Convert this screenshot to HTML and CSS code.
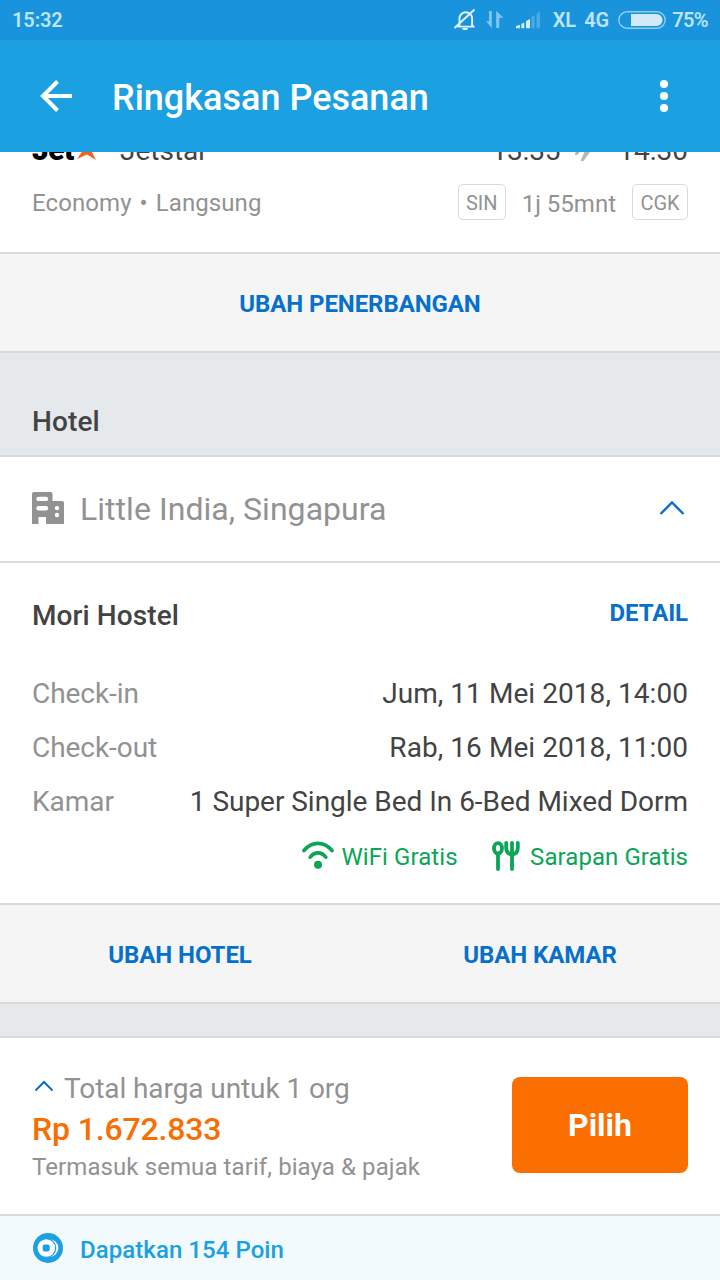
FILE: index.html
```html
<!DOCTYPE html>
<html lang="id">
<head>
<meta charset="utf-8">
<title>Ringkasan Pesanan</title>
<link rel="stylesheet" href="styles.css">
</head>
<body>
<div class="screen">
  <div class="status-bar">
    <span class="clock">15:32</span>
    <svg class="status-icons" width="92" height="24" viewBox="0 0 92 24">
      <g fill="none" stroke="#e3f3fc" stroke-width="1.9">
        <path d="M4.500 18.600h17M6.500 18V10.500a6.300 6.300 0 0 1 12.600 0V18l2.400.8M1.500 20L21.500 1.500"/>
      </g>
      <path d="M9 20h6a3 2 0 0 1-6 0z" fill="#e3f3fc"/>
      <path d="M38.800 3v17L33 13.200h3V3zM43.200 20V3L50.500 9.800h-4.300V20z" fill="#84c5ee"/>
      <path d="M63 20.300v-2.300l4-1.200v3.500zM68.300 20.300v-4.300l3-1.500v5.800zM73 20.300v-7.300l4-2v9.300z" fill="#d5ecfa"/>
      <path d="M78.500 20.300V9l3-2v13.300zM83.500 20.300V5.500l3.500-2v16.800z" fill="#4aabe3"/>
    </svg>
    <span class="carrier">XL</span>
    <span class="network">4G</span>
    <svg class="battery" width="48" height="18" viewBox="0 0 48 18">
      <rect x=".8" y=".8" width="46.400" height="16.400" rx="8.200" fill="none" stroke="#8dcff3" stroke-width="1.400"/>
      <path d="M13 3h25.500a6 6 0 0 1 0 12H13z" fill="#d3e9f7"/>
    </svg>
    <span class="percent">75%</span>
  </div>

  <header class="app-bar">
    <svg class="back" width="32" height="32" viewBox="0 0 32 32" fill="none" stroke="#fff" stroke-width="4">
      <path d="M17.500 1.500L3 16l14.500 14.500M3 16h29"/>
    </svg>
    <h1 class="title">Ringkasan Pesanan</h1>
    <svg class="more" width="8" height="32" viewBox="0 0 8 32" fill="#fff">
      <circle cx="4" cy="4" r="4"/><circle cx="4" cy="16" r="4"/><circle cx="4" cy="28" r="4"/>
    </svg>
  </header>

  <main class="content">
    <section class="flight">
      <div class="flight-main">
        <span class="logo">Jet</span>
        <svg class="star" width="20" height="22" viewBox="0 0 20 22"><path d="M10 0l2.500 8H20l-5.500 5L19 22l-9-5.500L0 21l5.500-8L0 8h7.500z" fill="#f4631e"/></svg>
        <span class="airline">Jetstar</span>
        <span class="time time-from">13:35</span>
        <svg class="plane" width="24" height="24" viewBox="0 0 24 24" fill="#b5b5b5"><path d="M2 7h3l2.500 4h5L9.500 2h3l6 9H22a2 2 0 0 1 0 4h-5l-6.500 9h-3l4-9H7l-3 3H2l1-5z"/></svg>
        <span class="time">14:30</span>
      </div>
      <div class="flight-meta">
        <span class="cabin">Economy<span class="dot">•</span>Langsung</span>
        <span class="airport">SIN</span>
        <span class="duration">1j 55mnt</span>
        <span class="airport airport-to">CGK</span>
      </div>
    </section>
    <div class="actions actions-flight"><a class="link change-flight">UBAH PENERBANGAN</a></div>
    <h2 class="group-title"><span>Hotel</span></h2>

    <section class="place">
      <svg class="building" width="32" height="32" viewBox="0 0 32 32">
        <path fill="#929292" fill-rule="evenodd" d="M2 0h16.500a2 2 0 0 1 2 2v7H30a2 2 0 0 1 2 2v21H14v-7H6.500v7H0V2a2 2 0 0 1 2-2zM6.500 4.700a2.200 2.200 0 0 0 0 4.400h7.500a2.200 2.200 0 0 0 0-4.400zM6.500 14a2.200 2.200 0 0 0 0 4.400h7.500a2.200 2.200 0 0 0 0-4.400zM25 13.900a2.200 2.200 0 1 0 0 4.400a2.200 2.200 0 0 0 0-4.400zM25 20.800a2.200 2.200 0 1 0 0 4.400a2.200 2.200 0 0 0 0-4.400z"/>
      </svg>
      <span class="place-name">Little India, Singapura</span>
      <svg class="collapse" width="26" height="16" viewBox="0 0 26 16" fill="none" stroke="#0770cd" stroke-width="2.400"><path d="M1.500 14L13 2.500 24.500 14"/></svg>
    </section>

    <section class="hotel">
      <div class="hotel-head"><h3 class="hotel-name">Mori Hostel</h3><a class="link detail">DETAIL</a></div>
      <dl class="stay">
        <div class="stay-row"><dt class="check-in">Check-in</dt><dd class="date-in">Jum, 11 Mei 2018, 14:00</dd></div>
        <div class="stay-row"><dt class="check-out">Check-out</dt><dd class="date-out">Rab, 16 Mei 2018, 11:00</dd></div>
        <div class="stay-row"><dt class="room">Kamar</dt><dd class="room-name">1 Super Single Bed In 6-Bed Mixed Dorm</dd></div>
      </dl>
      <div class="perks">
        <svg class="wifi" width="32" height="28" viewBox="0 0 32 28" fill="none" stroke="#0ba556" stroke-width="3.600" stroke-linecap="round">
          <path d="M2 9.500C10 0 22 0 30 9.500M8.200 16.200c4.300-5.800 11.300-5.800 15.600 0"/><circle cx="16" cy="23.700" r="4" fill="#0ba556" stroke="none"/>
        </svg>
        <span class="wifi-label">WiFi Gratis</span>
        <svg class="cutlery" width="28" height="30" viewBox="0 0 28 30" fill="none" stroke="#0ba556" stroke-width="3.800" stroke-linecap="round">
          <ellipse cx="6" cy="7.300" rx="4" ry="5.200"/><path d="M6 13.500V28M20 2v26M14.200 2v5c0 4 2 6 5.800 6.500c3.800-.5 5.800-2.500 5.800-6.500V2"/>
        </svg>
        <span class="breakfast-label">Sarapan Gratis</span>
      </div>
    </section>
    <div class="actions actions-hotel"><a class="link change-hotel">UBAH HOTEL</a><a class="link change-room">UBAH KAMAR</a></div>
  </main>

  <footer class="summary">
    <div class="price-block">
      <div class="total"><svg class="expand" width="20" height="12" viewBox="0 0 20 12" fill="none" stroke="#0770cd" stroke-width="2"><path d="M1.500 10.500L10 2l8.500 8.500"/></svg><span>Total harga untuk 1 org</span></div>
      <div class="price"><span>Rp 1.672.833</span></div>
      <div class="tax"><span>Termasuk semua tarif, biaya &amp; pajak</span></div>
    </div>
    <button class="choose"><span>Pilih</span></button>
  </footer>
  <div class="points">
    <svg class="coin" width="30" height="30" viewBox="0 0 30 30">
      <circle cx="15" cy="15" r="15" fill="#1ba0e1"/>
      <circle cx="16.500" cy="15" r="8.800" fill="#fff"/>
      <circle cx="13.300" cy="15" r="9.400" fill="#fff" stroke="#1ba0e1" stroke-width="1.200"/>
      <rect x="9.700" y="11.500" width="7" height="7" rx="2" fill="#1ba0e1"/>
    </svg>
    <span class="points-label">Dapatkan 154 Poin</span>
  </div>
</div>
</body>
</html>
```
FILE: styles.css
```css
* { box-sizing: border-box; }
body, h1, h2, h3, dl, dd { margin: 0; }
body { background: #fff; font-family: Roboto, "Noto Sans", sans-serif; }
svg { display: block; flex: none; }
span, a, dt, dd { white-space: nowrap; }

.screen { width: 720px; height: 1280px; display: flex; flex-direction: column; overflow: hidden; }

.status-bar { height: 40px; flex: none; display: flex; align-items: center; padding: 0 12px; background: #1994dc; color: #bfe4f9; font-size: 20px; font-weight: 600; line-height: 40px; }
.status-icons { margin-left: auto; }
.carrier { margin-left: 8px; }
.network { margin-left: 8px; }
.battery { margin: 0 6px 0 9px; }
.clock { letter-spacing: -.1px; }
.percent { letter-spacing: -.6px; }

.app-bar { height: 112px; flex: none; display: flex; align-items: center; padding: 0 52px 0 40px; background: #1ba0e1; color: #fff; }
.title { margin: 3px 0 0 40px; font-size: 36px; font-weight: 500; line-height: 44px; }
.more { margin-left: auto; }

.content { height: 884px; flex: none; overflow: hidden; background: #e6e9ec; }
.flight { height: 102px; overflow: hidden; background: #fff; border-bottom: 2px solid #dadada; padding: 0 32px; }
.flight-main { margin-top: -21px; height: 40px; line-height: 40px; display: flex; color: #434343; font-size: 28px; }
.logo { width: 45px; margin-top: -1px; color: #000; font-size: 30px; font-weight: 900; letter-spacing: -.6px; }
.star { margin: 7px 23px 0 0; }
.airline { margin-right: auto; letter-spacing: 0; }
.time-from { letter-spacing: -.2px; }
.plane { margin: 6px 21px 0 13px; }
.flight-meta { height: 36px; margin-top: 13px; display: flex; align-items: center; color: #929292; font-size: 24px; }
.cabin { margin: 2px auto 0 0; letter-spacing: .08px; }
.dot { margin: 0 8px; }
.airport { height: 36px; width: 48px; border: 1.500px solid #dadada; border-radius: 5px; line-height: 36px; text-align: center; font-size: 20px; }
.airport-to { width: 56px; }
.duration { margin: 4px 16px 0; }

.actions { display: flex; background: #f5f5f5; border-bottom: 2px solid #dadada; line-height: 100px; }
.actions .link { flex: 1; text-align: center; letter-spacing: -.08px; }
.actions-flight { height: 99px; }
.actions-hotel { height: 99px; }
.link { color: #0770cd; font-size: 24px; font-weight: 700; }
.group-title { height: 104px; padding: 51px 32px 0; border-bottom: 2px solid #dadada; color: #434343; font-size: 28px; font-weight: 500; line-height: 36px; letter-spacing: .1px; }

.place { height: 106px; display: flex; align-items: center; padding: 0 35px 2px 32px; background: #fff; border-bottom: 2px solid #dadada; color: #929292; font-size: 32px; }
.place-name { margin: 2px auto 0 16px; letter-spacing: .04px; }
.collapse { margin-top: -1px; }

.hotel { height: 342px; padding: 35px 32px 0; background: #fff; border-bottom: 2px solid #dadada; color: #434343; }
.hotel-head { height: 36px; display: flex; justify-content: space-between; line-height: 36px; }
.hotel-name { font-size: 28px; font-weight: 500; letter-spacing: .1px; }
.detail { margin-top: -3px; letter-spacing: -.1px; }
.stay { padding-top: 33px; font-size: 28px; line-height: 54px; }
.stay-row { height: 54px; display: flex; justify-content: space-between; }
.stay dt { color: #929292; letter-spacing: -.05px; }
.date-in, .date-out { letter-spacing: .06px; }
.room-name { letter-spacing: -.03px; }
.perks { height: 56px; display: flex; justify-content: flex-end; align-items: center; color: #0ba556; font-size: 24px; }
.wifi { margin: 0 8px 4px 0; }
.wifi-label { letter-spacing: .07px; }
.cutlery { margin: 0 10px 2px 34.500px; }
.breakfast-label { letter-spacing: .07px; }

.summary { height: 180px; flex: none; display: flex; justify-content: space-between; padding: 32px 32px 0; background: #fff; border-top: 2px solid #dadada; border-bottom: 2px solid #dadada; }
.total { height: 37px; display: flex; align-items: center; gap: 10px; color: #929292; font-size: 28px; letter-spacing: -.08px; }
.expand { margin: 0 0 5px 2px; }
.price { color: #f96d01; font-size: 32px; font-weight: 500; line-height: 44px; letter-spacing: -.15px; }
.tax { color: #929292; font-size: 24px; line-height: 32px; letter-spacing: .09px; }
.choose { width: 176px; height: 96px; margin-top: 7px; padding: 0; border: 0; border-radius: 8px; background: #fb6e00; color: #fff; font: 700 32px Roboto, sans-serif; }
.points { height: 64px; flex: none; display: flex; align-items: center; padding: 0 33px; background: #f2fafe; color: #1ba0e1; font-size: 24px; font-weight: 500; }
.points-label { margin: 4px 0 0 17px; letter-spacing: .06px; }
```
